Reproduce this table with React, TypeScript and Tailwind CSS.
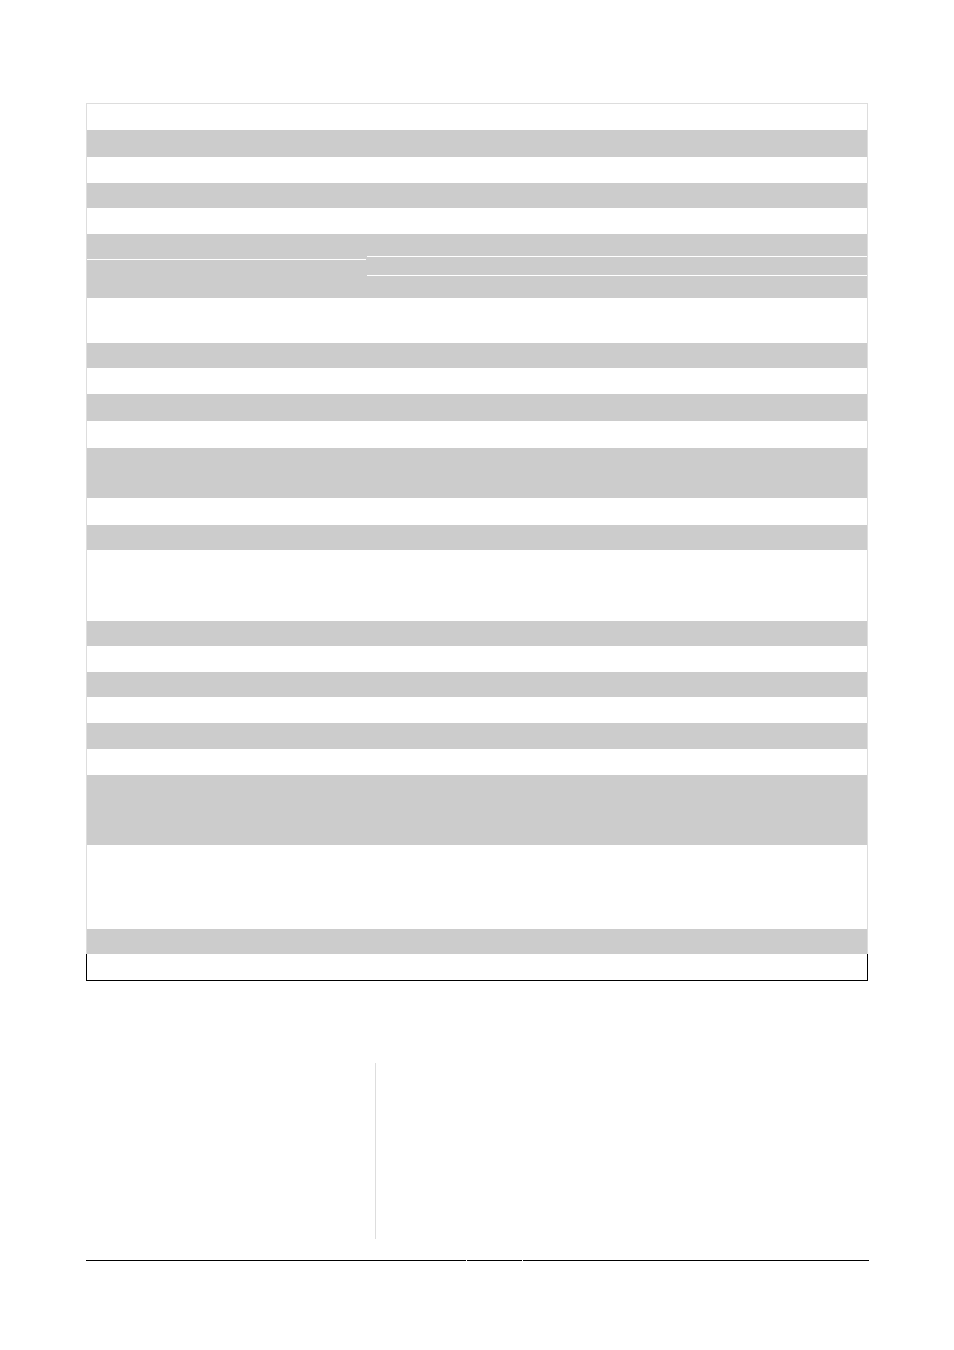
import React from 'react';

// alternating bands of the table, heights in px (top border adds 1 to the first)
const rowsTop: { h: number; gray: boolean }[] = [
  { h: 26, gray: false },
  { h: 27, gray: true },
  { h: 26, gray: false },
  { h: 25, gray: true },
  { h: 26, gray: false },
];

const rowsBottom: { h: number; gray: boolean }[] = [
  { h: 45, gray: false },
  { h: 25, gray: true },
  { h: 26, gray: false },
  { h: 27, gray: true },
  { h: 27, gray: false },
  { h: 50, gray: true },
  { h: 27, gray: false },
  { h: 25, gray: true },
  { h: 71, gray: false },
  { h: 25, gray: true },
  { h: 26, gray: false },
  { h: 25, gray: true },
  { h: 26, gray: false },
  { h: 26, gray: true },
  { h: 26, gray: false },
  { h: 70, gray: true },
  { h: 84, gray: false },
  { h: 25, gray: true },
];

function Band({ h, gray }: { h: number; gray: boolean }) {
  return <div className={gray ? 'bg-[#cccccc]' : 'bg-white'} style={{ height: h }} />;
}

export default function App() {
  return (
    <div className="min-h-[1350px] w-[954px] bg-white font-['Liberation_Sans',sans-serif]">
      <div className="pl-[86px] pt-[103px]">
        <div className="w-[782px]">
          <div className="border-x border-t border-[#dddddd]">
            {rowsTop.map((r, i) => (
              <Band key={i} {...r} />
            ))}
            {/* split row: left cell with one rule, right cell with two */}
            <div className="flex h-[64px] bg-[#cccccc]">
              <div className="flex w-[279px] flex-col">
                <div className="h-[25px]" />
                <div className="h-px bg-white" />
                <div className="flex-1" />
              </div>
              <div className="flex flex-1 flex-col pl-px">
                <div className="h-[22px]" />
                <div className="h-px bg-white" />
                <div className="h-[18px]" />
                <div className="h-px bg-white" />
                <div className="flex-1" />
              </div>
            </div>
            {rowsBottom.map((r, i) => (
              <Band key={i} {...r} />
            ))}
          </div>
          <div className="h-[27px] border-x border-b border-black bg-white" />
        </div>
      </div>

      <div className="flex pl-[375px] pt-[82px]">
        <div className="h-[176px] w-px bg-[#dddddd]" />
      </div>

      <div className="flex gap-px pl-[86px] pt-[21px]">
        <div className="h-px w-[380px] bg-black" />
        <div className="h-px w-[55px] bg-black" />
        <div className="h-px w-[346px] bg-black" />
      </div>
    </div>
  );
}
